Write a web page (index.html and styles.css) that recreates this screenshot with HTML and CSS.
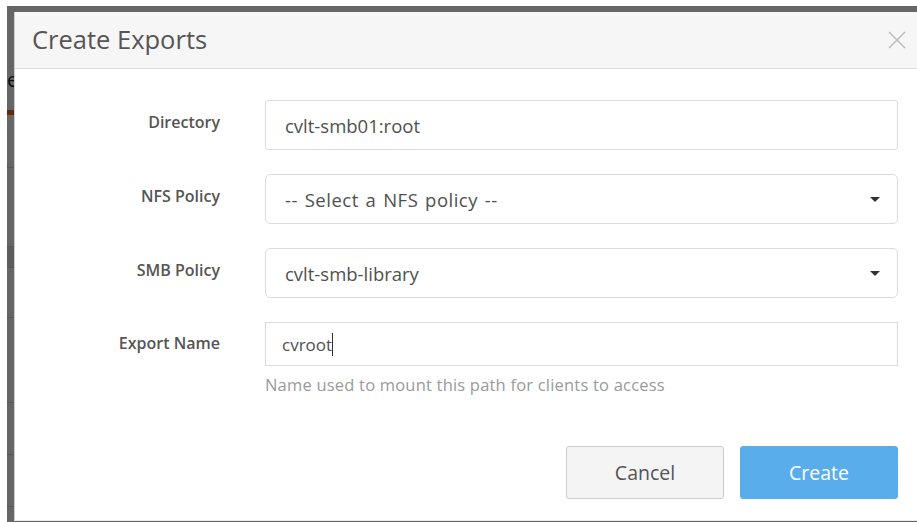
FILE: index.html
```html
<!DOCTYPE html>
<html lang="en">
<head>
<meta charset="utf-8">
<title>Create Exports</title>
<link rel="stylesheet" href="styles.css">
</head>
<body>
  <div class="page">
    <div class="pg-head"><span class="pg-title">e</span></div>
    <div class="pg-tab"></div>
    <div class="pg-row h53"></div>
    <div class="pg-row h79"></div>
    <div class="pg-row h21 shaded"></div>
    <div class="pg-row h50"></div>
    <div class="pg-row h85"></div>
    <div class="pg-row h52"></div>
    <div class="pg-row h52"></div>

    <div class="backdrop"></div>

    <div class="modal" role="dialog" aria-labelledby="dlg-title">
      <div class="modal-header">
        <h4 class="modal-title" id="dlg-title">Create Exports</h4>
        <button class="close" type="button" aria-label="Close">
          <svg viewBox="0 0 18 18" width="18" height="18"><path d="M1 1L17 17M17 1L1 17" stroke="#b9b9b9" stroke-width="1.4" fill="none"/></svg>
        </button>
      </div>

      <div class="modal-body">
        <form class="form">
          <label class="form-label">Directory</label>
          <div class="field">
            <div class="control">cvlt-smb01:root</div>
          </div>

          <label class="form-label">NFS Policy</label>
          <div class="field">
            <div class="control select"><span class="placeholder">-- Select a NFS policy --</span><span class="caret"></span></div>
          </div>

          <label class="form-label">SMB Policy</label>
          <div class="field">
            <div class="control select"><span>cvlt-smb-library</span><span class="caret"></span></div>
          </div>

          <label class="form-label short">Export Name</label>
          <div class="field">
            <div class="control short">cvroot<span class="cursor"></span></div>
            <p class="help">Name used to mount this path for clients to access</p>
          </div>
        </form>
      </div>

      <div class="modal-footer">
        <button class="btn btn-default" type="button">Cancel</button>
        <button class="btn btn-primary" type="button">Create</button>
      </div>
    </div>
  </div>
</body>
</html>
```

FILE: styles.css
```css
* { box-sizing: border-box; }

html, body {
  margin: 0;
  padding: 0;
}

body {
  width: 917px;
  height: 522px;
  overflow: hidden;
  background: #fff;
  font-family: "Open Sans", Lato, "Liberation Sans", sans-serif;
  color: #555;
}

/* underlying page, dimmed by the backdrop */
.page {
  position: relative;
  margin: 6px 0 0 7px;
  height: 516px;
  background: #fff;
  display: flex;
  flex-direction: column;
}

.pg-head {
  height: 104px;
  padding-top: 62px;
  line-height: 24px;
}

.pg-title {
  font-size: 20px;
  color: #222;
}

.pg-tab {
  height: 5px;
  background: #ec6d23;
}

.pg-row { border-bottom: 1px solid #d8d8d8; }
.pg-row.shaded { background: #e9e9e9; }
.h53 { height: 53px; }
.h79 { height: 79px; }
.h21 { height: 21px; }
.h50 { height: 50px; }
.h85 { height: 85px; }
.h52 { height: 52px; }

.backdrop {
  position: absolute;
  inset: 0;
  background: rgba(0, 0, 0, 0.6);
}

/* dialog */
.modal {
  position: absolute;
  left: 7px;
  top: 6px;
  width: 930px;
  height: 509px;
  background: #fff;
  border-left: 1px solid #d0d0d0;
  border-bottom: 1px solid #ececec;
}

.modal-header {
  height: 57px;
  background: #f6f6f6;
  border-bottom: 1px solid #dddddd;
  display: flex;
  align-items: center;
  justify-content: space-between;
  padding: 0 38px 0 17px;
}

.modal-title {
  margin: 0 0 2px;
  font-size: 25.5px;
  font-weight: 400;
  color: #555;
}

.close {
  border: 0;
  background: none;
  padding: 0;
  width: 18px;
  height: 18px;
  display: block;
}

.close svg { display: block; }

.modal-body {
  padding-top: 31px;
}

.form {
  margin: 0;
  display: grid;
  grid-template-columns: 205px 633px;
  column-gap: 45px;
  row-gap: 24px;
  align-items: start;
}

.form-label {
  text-align: right;
  font-weight: 600;
  font-size: 16px;
  color: #555;
  line-height: 44px;
}

.form-label.short { line-height: 42px; }

.control {
  height: 50px;
  border: 1px solid #dcdcdc;
  border-radius: 3px;
  background: #fff;
  padding: 0 16px 0 19px;
  display: flex;
  align-items: center;
  font-size: 18.5px;
  color: #505050;
}

.control.short {
  height: 44px;
  border-radius: 0;
  font-size: 17px;
  padding-left: 16px;
}

.control.select {
  justify-content: space-between;
  border-radius: 5px;
}

.placeholder { word-spacing: 1.5px; letter-spacing: 0.5px; }

.caret {
  width: 0;
  height: 0;
  border-left: 5px solid transparent;
  border-right: 5px solid transparent;
  border-top: 5px solid #333;
  margin-right: 1px;
}

.cursor {
  display: inline-block;
  width: 1px;
  height: 23px;
  background: #333;
}

.help {
  margin: 9px 0 0;
  font-size: 16.5px;
  line-height: 20px;
  letter-spacing: 0.2px;
  color: #9a9a9a;
}

.modal-footer {
  display: flex;
  justify-content: flex-end;
  gap: 16px;
  padding: 51px 46px 0 0;
}

.btn {
  width: 158px;
  height: 53px;
  border-radius: 3px;
  font-family: inherit;
  font-size: 19.5px;
}

.btn-default {
  background: #f4f4f4;
  border: 1px solid #cccccc;
  color: #555;
}

.btn-primary {
  background: #5aadeb;
  border: 1px solid #5aadeb;
  color: #fff;
}
```
